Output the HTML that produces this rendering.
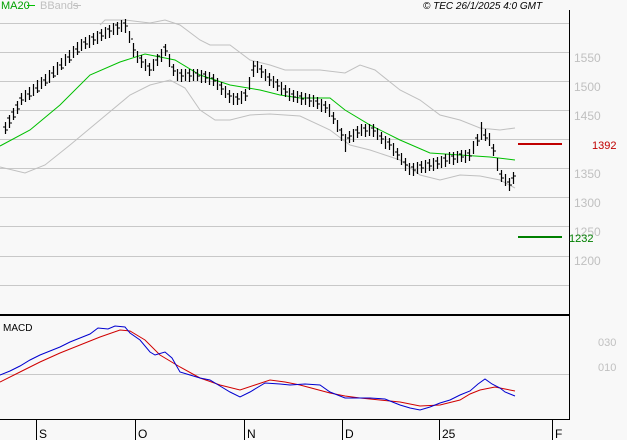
<!DOCTYPE html>
<html><head><style>
html,body{margin:0;padding:0;background:#f8f8f8;width:627px;height:440px;overflow:hidden}
svg{display:block}
text{font-family:"Liberation Sans",sans-serif}
</style></head><body>
<svg width="627" height="440" xmlns="http://www.w3.org/2000/svg">
<rect width="627" height="440" fill="#f8f8f8"/>
<g stroke="#c8c8c8" stroke-width="1" shape-rendering="crispEdges">
<line x1="0" y1="23.5" x2="569" y2="23.5"/>
<line x1="0" y1="52.5" x2="569" y2="52.5"/>
<line x1="0" y1="81.5" x2="569" y2="81.5"/>
<line x1="0" y1="110.5" x2="569" y2="110.5"/>
<line x1="0" y1="139.5" x2="569" y2="139.5"/>
<line x1="0" y1="168.5" x2="569" y2="168.5"/>
<line x1="0" y1="197.5" x2="569" y2="197.5"/>
<line x1="0" y1="226.5" x2="569" y2="226.5"/>
<line x1="0" y1="256.5" x2="569" y2="256.5"/>
<line x1="0" y1="285.5" x2="569" y2="285.5"/>
<line x1="0" y1="374.5" x2="569" y2="374.5"/>
</g>
<g fill="#c0c0c0" font-size="12">
<text x="574" y="62">1550</text>
<text x="574" y="91">1500</text>
<text x="574" y="120">1450</text>
<text x="574" y="178">1350</text>
<text x="574" y="207">1300</text>
<text x="574" y="236">1250</text>
<text x="574" y="265">1200</text>
<text x="598" y="346" font-size="11">030</text>
<text x="598" y="371" font-size="11">010</text>
</g>
<g shape-rendering="crispEdges">
<line x1="569.5" y1="10" x2="569.5" y2="420" stroke="#000"/>
<line x1="0" y1="315" x2="569" y2="315" stroke="#000" stroke-width="2"/>
<line x1="0" y1="419.5" x2="570" y2="419.5" stroke="#000"/>
<g stroke="#000"><line x1="36.5" y1="420" x2="36.5" y2="440"/><line x1="135.5" y1="420" x2="135.5" y2="440"/><line x1="244.5" y1="420" x2="244.5" y2="440"/><line x1="342.5" y1="420" x2="342.5" y2="440"/><line x1="439.5" y1="420" x2="439.5" y2="440"/><line x1="552.5" y1="420" x2="552.5" y2="440"/></g>
</g>
<g font-size="12" fill="#000"><text x="39" y="438">S</text><text x="138" y="438">O</text><text x="247" y="438">N</text><text x="345" y="438">D</text><text x="442" y="438">25</text><text x="555" y="438">F</text></g>
<text x="1" y="9" font-size="11" fill="#00a000">MA20</text><line x1="27" y1="5.5" x2="35" y2="5.5" stroke="#00c000"/>
<text x="40" y="9" font-size="11" fill="#c0c0c0">BBands</text><line x1="73" y1="5.5" x2="81" y2="5.5" stroke="#c0c0c0"/>
<text x="423" y="9" font-size="10" font-style="italic" fill="#000">© TEC 26/1/2025 4:0 GMT</text>
<text x="3" y="331" font-size="10" fill="#000">MACD</text>
<line x1="518" y1="144" x2="562" y2="144" stroke="#c00000" stroke-width="2"/>
<text x="592" y="149" font-size="11" fill="#c00000">1392</text>
<line x1="518" y1="237" x2="562" y2="237" stroke="#008000" stroke-width="2"/>
<text x="569" y="242" font-size="11" fill="#008000">1232</text>
<g fill="none" stroke-width="1">
<polyline stroke="#c0c0c0" points="100,25 105,20 125,20 150,23 165,20 180,25 200,40 210,45 230,45 250,60 270,65 285,70 320,70 345,73 360,65 375,70 400,90 420,100 440,115 460,120 480,128 500,130 515,128"/>
<polyline stroke="#c0c0c0" points="0,167 25,173 45,165 70,145 100,120 130,95 150,85 170,80 185,88 200,110 215,120 230,120 250,115 270,114 300,116 330,130 350,145 370,150 385,155 400,160 420,175 440,180 460,175 480,176 500,180 515,188"/>
<polyline stroke="#00c000" points="0,146 30,130 60,105 90,75 120,62 145,54 175,60 200,75 230,85 260,90 280,95 300,98 330,98 345,110 370,125 400,140 430,153 460,155 490,157 515,160"/>
</g>
<path fill="none" stroke="#000" stroke-width="1.2" d="
M5.5,122v12M9.5,115v13M13.5,108v12M17.5,101v13M21.5,93v12M25.5,90v12M29.5,87v13M33.5,84v12M37.5,80v13M41.5,77v12M45.5,74v12M49.5,70v13M53.5,66v12M57.5,62v13M61.5,58v12M65.5,54v12M69.5,50v13M73.5,46v12M77.5,42v13M81.5,39v12M85.5,37v12M89.5,35v13M93.5,33v12M97.5,31v13M101.5,29v12M105.5,27v12M109.5,25v13M113.5,23v12M117.5,22v13M121.5,20v12M125.5,19v14M129.5,31v12M133.5,43v14M137.5,51v12M141.5,55v13M145.5,59v12M149.5,63v13M153.5,59v12M157.5,54v12M161.5,49v13M165.5,44v12M169.5,54v13M173.5,64v12M177.5,69v12M181.5,69v13M185.5,69v12M189.5,69v13M193.5,69v12M197.5,69v12M201.5,70v13M205.5,71v12M209.5,72v13M213.5,74v12M217.5,78v12M221.5,82v13M225.5,86v12M229.5,90v13M233.5,93v12M237.5,93v12M241.5,91v13M245.5,89v12M249.5,77v13M253.5,61v16M257.5,61v12M261.5,65v13M265.5,69v12M269.5,73v13M273.5,76v12M277.5,79v12M281.5,82v13M285.5,85v12M289.5,88v13M293.5,90v12M297.5,91v12M301.5,92v13M305.5,93v12M309.5,94v13M313.5,95v12M317.5,97v12M321.5,99v13M325.5,101v12M329.5,104v13M333.5,112v12M337.5,120v12M341.5,128v13M345.5,134v18M349.5,131v12M353.5,129v13M357.5,126v12M361.5,124v12M365.5,124v13M369.5,124v12M373.5,124v13M377.5,128v12M381.5,132v12M385.5,136v13M389.5,138v12M393.5,143v13M397.5,148v12M401.5,153v12M405.5,158v13M409.5,163v12M413.5,163v13M417.5,162v12M421.5,161v12M425.5,160v13M429.5,159v12M433.5,158v13M437.5,157v12M441.5,156v12M445.5,154v13M449.5,152v12M453.5,152v13M457.5,151v12M461.5,150v12M465.5,150v13M469.5,149v12M473.5,141v13M477.5,134v12M481.5,122v18M485.5,129v12M489.5,133v13M493.5,144v12M497.5,158v13M501.5,170v12M505.5,174v12M509.5,178v13M513.5,172v12"/>
<path fill="none" stroke="#000" stroke-width="1" d="
M3,127h2M6,130h2M7,118h2M10,123h2M11,112h2M14,117h2M15,105h2M18,109h2M19,98h2M22,100h2M27,94h2M30,96h2M35,88h2M38,91h2M43,80h2M46,83h2M51,73h2M54,76h2M59,65h2M62,68h2M67,57h2M70,60h2M75,49h2M78,52h2M83,42h2M86,44h2M91,37h2M94,40h2M99,33h2M102,36h2M107,29h2M110,31h2M115,25h2M118,28h2M123,23h2M126,26h2M131,39h2M134,50h2M139,58h2M142,62h2M147,66h2M150,70h2M155,60h2M158,56h2M163,47h2M166,51h2M171,67h2M174,71h2M179,73h2M182,76h2M187,73h2M190,76h2M195,73h2M198,76h2M203,74h2M206,78h2M211,78h2M214,81h2M219,85h2M222,89h2M227,94h2M230,96h2M235,97h2M238,99h2M243,93h2M246,96h2M251,70h2M254,66h2M259,69h2M262,72h2M267,77h2M270,80h2M275,82h2M278,86h2M283,89h2M286,92h2M291,94h2M294,97h2M299,96h2M302,99h2M307,98h2M310,101h2M315,101h2M318,104h2M323,105h2M326,108h2M331,116h2M334,119h2M339,130h2M342,135h2M347,138h2M350,136h2M355,130h2M358,133h2M363,128h2M366,131h2M371,128h2M374,131h2M379,136h2M382,139h2M387,142h2M390,145h2M395,152h2M398,155h2M403,162h2M406,165h2M411,167h2M414,170h2M419,165h2M422,168h2M427,163h2M430,166h2M435,161h2M438,164h2M443,158h2M446,161h2M451,156h2M454,159h2M459,154h2M462,157h2M467,153h2M470,156h2M475,138h2M478,141h2M483,135h2M486,138h2M491,148h2M494,151h2M499,174h2M502,178h2M507,182h2M510,185h2M511,178h2M514,176h2"/>
<g fill="none" stroke-width="1">
<polyline stroke="#d00000" points="0,382 20,372 40,362 60,353 80,345 100,337 120,330 130,331 145,340 160,355 180,367 200,378 220,385 240,390 255,385 270,380 285,382 300,385 315,389 330,393 345,396 360,398 380,400 400,402 420,406 440,405 460,400 470,394 480,390 495,387 505,389 515,391"/>
<polyline stroke="#0000d0" points="0,375 10,371 20,366 30,360 40,355 50,351 60,347 70,342 80,338 90,334 98,328 108,329 115,326 125,327 130,333 140,340 150,352 155,355 165,352 172,358 180,372 190,375 200,378 210,380 220,386 230,392 240,397 250,392 265,383 280,384 290,385 305,384 320,385 330,392 345,398 360,398 370,398 385,399 400,405 410,408 420,410 430,407 440,403 450,400 460,395 470,391 478,384 485,379 492,384 500,388 505,392 515,396"/>
</g>
</svg>
</body></html>
